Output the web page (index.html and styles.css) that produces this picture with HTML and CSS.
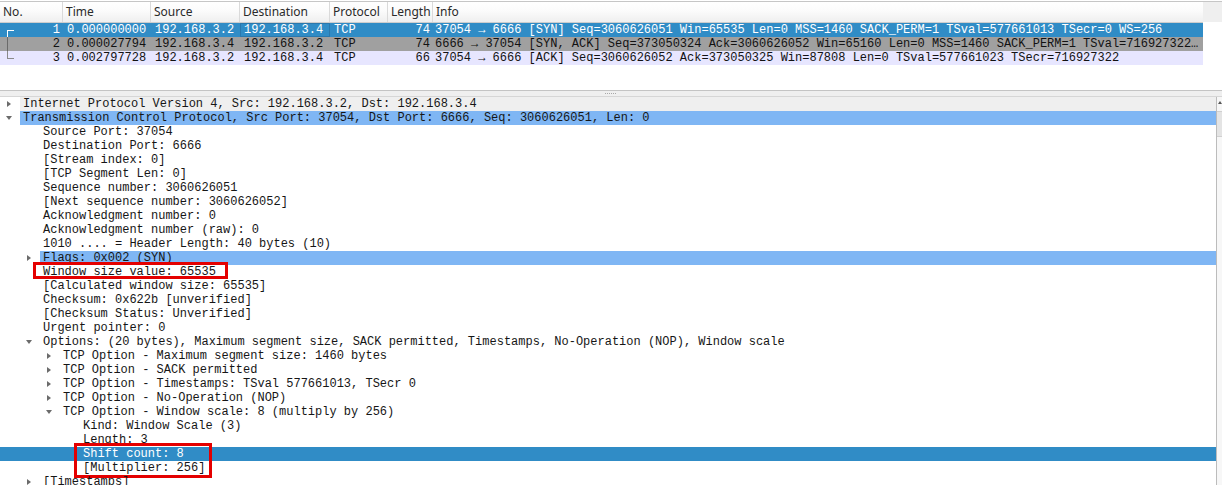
FILE: index.html
```html
<!DOCTYPE html>
<html>
<head>
<meta charset="utf-8">
<link rel="stylesheet" href="styles.css">
</head>
<body>
<div class="top">
  <div class="plist">
    <div class="phead">
      <div class="hc c-no">No.</div>
      <div class="hc c-time">Time</div>
      <div class="hc c-src">Source</div>
      <div class="hc c-dst">Destination</div>
      <div class="hc c-proto">Protocol</div>
      <div class="hc c-len">Length</div>
      <div class="hc c-info">Info</div>
    </div>
    <div class="prow sel">
      <div class="pc c-no num"><svg class="br" width="14" height="14" viewBox="0 0 14 14"><rect x="7" y="7" width="8" height="1" fill="#fff"/><rect x="7" y="7" width="1" height="7" fill="#fff"/></svg><span>1</span></div>
      <div class="pc c-time">0.000000000</div>
      <div class="pc c-src">192.168.3.2</div>
      <div class="pc c-dst focus">192.168.3.4</div>
      <div class="pc c-proto">TCP</div>
      <div class="pc c-len num">74</div>
      <div class="pc c-info">37054 → 6666 [SYN] Seq=3060626051 Win=65535 Len=0 MSS=1460 SACK_PERM=1 TSval=577661013 TSecr=0 WS=256</div>
    </div>
    <div class="prow synfin">
      <div class="pc c-no num"><svg class="br" width="14" height="14" viewBox="0 0 14 14"><rect x="7" y="0" width="1" height="14" fill="#6a6a6a"/></svg><span>2</span></div>
      <div class="pc c-time">0.000027794</div>
      <div class="pc c-src">192.168.3.4</div>
      <div class="pc c-dst">192.168.3.2</div>
      <div class="pc c-proto">TCP</div>
      <div class="pc c-len num">74</div>
      <div class="pc c-info">6666 → 37054 [SYN, ACK] Seq=373050324 Ack=3060626052 Win=65160 Len=0 MSS=1460 SACK_PERM=1 TSval=716927322…</div>
    </div>
    <div class="prow tcp">
      <div class="pc c-no num"><svg class="br" width="14" height="14" viewBox="0 0 14 14"><rect x="7" y="0" width="1" height="8" fill="#8a8a8a"/><rect x="7" y="7" width="8" height="1" fill="#8a8a8a"/></svg><span>3</span></div>
      <div class="pc c-time">0.002797728</div>
      <div class="pc c-src">192.168.3.2</div>
      <div class="pc c-dst">192.168.3.4</div>
      <div class="pc c-proto">TCP</div>
      <div class="pc c-len num">66</div>
      <div class="pc c-info">37054 → 6666 [ACK] Seq=3060626052 Ack=373050325 Win=87808 Len=0 TSval=577661023 TSecr=716927322</div>
    </div>
  </div>
  <div class="rcorner"><div class="rhead"></div></div>
</div>
<div class="splitter"><span class="grip"></span></div>
<div class="detail">
  <div class="tree">
    <div class="node lv0 hover"><span class="ar"><i class="tri-r"></i></span><span class="lbl">Internet Protocol Version 4, Src: 192.168.3.2, Dst: 192.168.3.4</span></div>
    <div class="node lv0 hl"><span class="ar"><i class="tri-d"></i></span><span class="lbl">Transmission Control Protocol, Src Port: 37054, Dst Port: 6666, Seq: 3060626051, Len: 0</span></div>
    <div class="node lv1"><span class="ar"></span><span class="lbl">Source Port: 37054</span></div>
    <div class="node lv1"><span class="ar"></span><span class="lbl">Destination Port: 6666</span></div>
    <div class="node lv1"><span class="ar"></span><span class="lbl">[Stream index: 0]</span></div>
    <div class="node lv1"><span class="ar"></span><span class="lbl">[TCP Segment Len: 0]</span></div>
    <div class="node lv1"><span class="ar"></span><span class="lbl">Sequence number: 3060626051</span></div>
    <div class="node lv1"><span class="ar"></span><span class="lbl">[Next sequence number: 3060626052]</span></div>
    <div class="node lv1"><span class="ar"></span><span class="lbl">Acknowledgment number: 0</span></div>
    <div class="node lv1"><span class="ar"></span><span class="lbl">Acknowledgment number (raw): 0</span></div>
    <div class="node lv1"><span class="ar"></span><span class="lbl">1010 .... = Header Length: 40 bytes (10)</span></div>
    <div class="node lv1 hl"><span class="ar"><i class="tri-r"></i></span><span class="lbl">Flags: 0x002 (SYN)</span></div>
    <div class="node lv1"><span class="ar"></span><span class="lbl">Window size value: 65535</span><span class="mark mark-win"></span></div>
    <div class="node lv1"><span class="ar"></span><span class="lbl">[Calculated window size: 65535]</span></div>
    <div class="node lv1"><span class="ar"></span><span class="lbl">Checksum: 0x622b [unverified]</span></div>
    <div class="node lv1"><span class="ar"></span><span class="lbl">[Checksum Status: Unverified]</span></div>
    <div class="node lv1"><span class="ar"></span><span class="lbl">Urgent pointer: 0</span></div>
    <div class="node lv1"><span class="ar"><i class="tri-d"></i></span><span class="lbl">Options: (20 bytes), Maximum segment size, SACK permitted, Timestamps, No-Operation (NOP), Window scale</span></div>
    <div class="node lv2"><span class="ar"><i class="tri-r"></i></span><span class="lbl">TCP Option - Maximum segment size: 1460 bytes</span></div>
    <div class="node lv2"><span class="ar"><i class="tri-r"></i></span><span class="lbl">TCP Option - SACK permitted</span></div>
    <div class="node lv2"><span class="ar"><i class="tri-r"></i></span><span class="lbl">TCP Option - Timestamps: TSval 577661013, TSecr 0</span></div>
    <div class="node lv2"><span class="ar"><i class="tri-r"></i></span><span class="lbl">TCP Option - No-Operation (NOP)</span></div>
    <div class="node lv2"><span class="ar"><i class="tri-d"></i></span><span class="lbl">TCP Option - Window scale: 8 (multiply by 256)</span></div>
    <div class="node lv3"><span class="ar"></span><span class="lbl">Kind: Window Scale (3)</span></div>
    <div class="node lv3"><span class="ar"></span><span class="lbl">Length: 3</span></div>
    <div class="node lv3 selected"><span class="ar"></span><span class="lbl">Shift count: 8</span><span class="mark mark-shift"></span></div>
    <div class="node lv3"><span class="ar"></span><span class="lbl">[Multiplier: 256]</span></div>
    <div class="node lv1"><span class="ar"><i class="tri-r"></i></span><span class="lbl">[Timestamps]</span></div>
  </div>
  <div class="vscroll">
    <div class="sarrow"></div>
    <div class="sthumb"></div>
  </div>
</div>
</body>
</html>
```
FILE: styles.css
```css
html, body {
  margin: 0;
  padding: 0;
  background: #ffffff;
}
body {
  width: 1222px;
  height: 485px;
  overflow: hidden;
  font-family: "Liberation Mono", "DejaVu Sans Mono", monospace;
  font-size: 12px;
}

/* ---------- packet list ---------- */
.top {
  display: flex;
  height: 90px;
}
.plist {
  width: 1203px;
  flex: none;
}
.rcorner {
  flex: 1;
  padding-top: 1px;
}
.rhead {
  height: 21px;
  background: #efefef;
  border-top: 1px solid #c6c6c6;
  box-sizing: border-box;
}
.phead {
  display: flex;
  margin-top: 1px;
  height: 22px;
  box-sizing: border-box;
  border-top: 1px solid #c6c6c6;
  border-bottom: 1px solid #cdcdcd;
  background: linear-gradient(#ffffff, #fbfbfb 45%, #efefef);
  font-family: "Noto Sans", "Open Sans", sans-serif;
  font-size: 12px;
  color: #2a2a2a;
}
.hc {
  box-sizing: border-box;
  padding-left: 3px;
  line-height: 20px;
  border-right: 1px solid #dadada;
  white-space: nowrap;
  overflow: hidden;
}
.c-no { width: 63px; flex: none; }
.c-time { width: 88px; flex: none; }
.c-src { width: 89px; flex: none; }
.c-dst { width: 90px; flex: none; }
.c-proto { width: 58px; flex: none; }
.c-len { width: 45px; flex: none; }
.c-info { flex: 1; min-width: 0; border-right: none; }

.prow {
  display: flex;
  height: 14px;
  line-height: 14px;
  color: #121212;
}
.prow.sel { background: #308cc6; color: #ffffff; }
.prow.synfin { background: #a0a0a0; color: #121212; }
.prow.tcp { background: #e7e6ff; color: #121212; }
.pc {
  box-sizing: border-box;
  padding-left: 4px;
  white-space: nowrap;
  overflow: hidden;
}
.pc.num {
  padding-left: 0;
  padding-right: 3px;
  text-align: right;
}
.pc.c-no {
  display: flex;
  justify-content: space-between;
  align-items: stretch;
}
.br {
  display: block;
  flex: none;
}
.pc.c-info { padding-left: 2px; }
.pc.focus {
  box-shadow: inset 0 0 0 1px #2a78ad;
}

/* ---------- splitter ---------- */
.splitter {
  height: 5px;
  border-top: 1px solid #c4c4c4;
  border-bottom: 1px solid #d6d6d6;
  background: #efefef;
  display: flex;
  justify-content: center;
  align-items: center;
}
.grip {
  width: 12px;
  height: 1px;
  background: repeating-linear-gradient(90deg, #a8a8a8 0 1px, transparent 1px 2px);
}

/* ---------- detail tree ---------- */
.detail {
  display: flex;
  height: 388px;
  overflow: hidden;
}
.tree {
  width: 1216px;
  flex: none;
  overflow: hidden;
  color: #161616;
}
.node {
  position: relative;
  display: flex;
  height: 14px;
  line-height: 14px;
  white-space: nowrap;
}
.lv0 { padding-left: 0; }
.lv1 { padding-left: 20px; }
.lv2 { padding-left: 40px; }
.lv3 { padding-left: 60px; }
.ar {
  width: 18px;
  margin-right: 2px;
  flex: none;
  display: flex;
  justify-content: center;
  align-items: center;
}
.lbl {
  flex: 1;
  padding-left: 3px;
}
.node.hover .lbl { background: #efefef; }
.node.hl .lbl { background: #7fb6f4; }
.node.selected { background: #308cc6; color: #ffffff; }

.tri-r {
  display: block;
  width: 0;
  height: 0;
  border-left: 4px solid #6b6b6b;
  border-top: 3.5px solid transparent;
  border-bottom: 3.5px solid transparent;
}
.tri-d {
  display: block;
  width: 0;
  height: 0;
  border-top: 4px solid #6b6b6b;
  border-left: 3.5px solid transparent;
  border-right: 3.5px solid transparent;
}

.mark {
  position: absolute;
  border: 3px solid #e40000;
  box-sizing: border-box;
  pointer-events: none;
}
.mark-win {
  left: 33px;
  top: -3px;
  width: 195px;
  height: 17px;
}
.mark-shift {
  left: 74px;
  top: -4px;
  width: 138px;
  height: 35px;
}

/* ---------- scrollbar ---------- */
.vscroll {
  flex: 1;
  border-left: 1px solid #bcbcbc;
  background: #f7f7f7;
  display: flex;
  flex-direction: column;
  align-items: flex-end;
}
.sarrow {
  margin-top: 4px;
  width: 0;
  height: 0;
  border-bottom: 3px solid #555;
  border-left: 2px solid transparent;
  border-right: 2px solid transparent;
}
.sthumb {
  margin-top: 7px;
  width: 5px;
  height: 24px;
  background: #e4e4e4;
  border-top: 1px solid #d0d0d0;
  border-bottom: 1px solid #d0d0d0;
}
```
